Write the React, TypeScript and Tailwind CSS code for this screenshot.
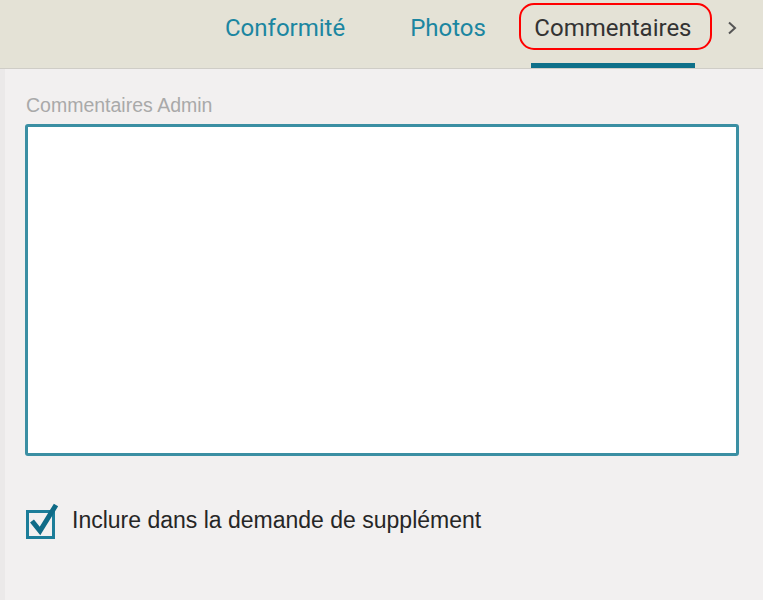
import React from "react";

export default function App() {
  return (
    <div className="w-[763px] h-[600px] bg-[#f2f0f0] relative overflow-hidden" style={{ fontFamily: '"Liberation Sans", Arial, sans-serif' }}>
      {/* header */}
      <div className="h-[69px] bg-[#e4e2d6] border-b border-[#cfcdc7] flex items-stretch" style={{ fontFamily: 'Roboto, "Liberation Sans", sans-serif' }}>
        <div className="pl-[225px] flex items-stretch text-[24px] leading-none">
          <div className="pt-[16px] text-[#1b86a1]">Conformité</div>
          <div className="ml-[65px] pt-[16px] text-[#1b86a1]">Photos</div>
          <div className="ml-[45px] w-[164px] flex flex-col items-center">
            <div className="pt-[16px] text-[#333333] flex-1">Commentaires</div>
            <div className="h-[5px] w-full bg-[#0e7089]"></div>
          </div>
          <div className="ml-[32px] pt-[21px]">
            <svg width="10" height="14" viewBox="0 0 10 14">
              <path d="M2 1.5 L8 7 L2 12.5" fill="none" stroke="#555" strokeWidth="2" />
            </svg>
          </div>
        </div>
      </div>
      <div className="absolute left-0 top-[69px] w-[5px] h-[531px] bg-[#ebe9e9]"></div>
      {/* annotation */}
      <div className="absolute left-[519px] top-[3px] w-[193px] h-[47px] border-[2px] border-[#ff0000] rounded-[15px]"></div>

      <div className="pl-[25px] pr-[24px]">
        <div className="mt-[27px] ml-[1px] text-[19.5px] leading-none text-[#a9a9a9]">Commentaires Admin</div>
        <div className="mt-[8px] h-[332px] bg-white border-[3px] border-[#3b8fa3] rounded-[3px]"></div>
        <div className="mt-[46px] flex items-center">
          <svg width="34" height="38" viewBox="0 0 34 38">
            <rect x="2.5" y="9.5" width="26" height="26" fill="none" stroke="#1c7d99" strokeWidth="3" />
            <path d="M7 19 L15 29 L31 3" fill="none" stroke="#0f6b87" strokeWidth="5" strokeLinejoin="miter" />
          </svg>
          <div className="ml-[13px] text-[23px] leading-none text-[#262626]">Inclure dans la demande de supplément</div>
        </div>
      </div>
    </div>
  );
}
